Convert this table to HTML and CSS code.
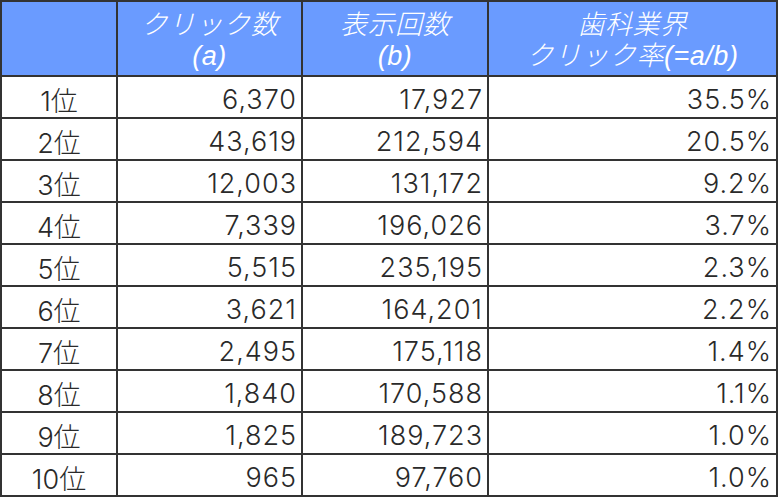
FILE: index.html
```html
<!DOCTYPE html>
<html lang="ja">
<head>
<meta charset="utf-8">
<title>歯科業界 クリック率</title>
<link rel="stylesheet" href="styles.css">
</head>
<body>
<div class="grid">
  <div class="cell head"></div>
  <div class="cell head"><span class="line">クリック数</span><span class="line">(a)</span></div>
  <div class="cell head"><span class="line">表示回数</span><span class="line">(b)</span></div>
  <div class="cell head"><span class="line">歯科業界</span><span class="line">クリック率(=a/b)</span></div>

  <div class="cell rank">1位</div><div class="cell num">6,370</div><div class="cell num">17,927</div><div class="cell num">35.5%</div>
  <div class="cell rank">2位</div><div class="cell num">43,619</div><div class="cell num">212,594</div><div class="cell num">20.5%</div>
  <div class="cell rank">3位</div><div class="cell num">12,003</div><div class="cell num">131,172</div><div class="cell num">9.2%</div>
  <div class="cell rank">4位</div><div class="cell num">7,339</div><div class="cell num">196,026</div><div class="cell num">3.7%</div>
  <div class="cell rank">5位</div><div class="cell num">5,515</div><div class="cell num">235,195</div><div class="cell num">2.3%</div>
  <div class="cell rank">6位</div><div class="cell num">3,621</div><div class="cell num">164,201</div><div class="cell num">2.2%</div>
  <div class="cell rank">7位</div><div class="cell num">2,495</div><div class="cell num">175,118</div><div class="cell num">1.4%</div>
  <div class="cell rank">8位</div><div class="cell num">1,840</div><div class="cell num">170,588</div><div class="cell num">1.1%</div>
  <div class="cell rank">9位</div><div class="cell num">1,825</div><div class="cell num">189,723</div><div class="cell num">1.0%</div>
  <div class="cell rank">10位</div><div class="cell num">965</div><div class="cell num">97,760</div><div class="cell num">1.0%</div>
</div>
</body>
</html>
```

FILE: styles.css
```css
html, body {
  margin: 0;
  padding: 0;
  background: #ffffff;
}

.grid {
  display: grid;
  grid-template-columns: 116px 185px 186px 289px;
  grid-template-rows: 75px repeat(10, 42px);
  width: 776px;
  border-top: 2px solid #333333;
  border-left: 2px solid #333333;
  font-family: "Inter", "Liberation Sans", "Noto Sans CJK JP", sans-serif;
  font-weight: 300;
  color: #2a2a2a;
}

.cell {
  box-sizing: border-box;
  border-right: 2px solid #333333;
  border-bottom: 2px solid #333333;
  display: flex;
  align-items: center;
  font-size: 27px;
  white-space: nowrap;
}

.head {
  background: #6a9bff;
  color: #ffffff;
  font-family: "Liberation Sans", "Noto Sans CJK JP", sans-serif;
  font-style: italic;
  font-weight: 300;
  font-size: 27px;
  letter-spacing: 0.5px;
  flex-direction: column;
  justify-content: center;
  text-align: center;
  padding-top: 4px;
}

.line {
  display: block;
  line-height: 31px;
  height: 31px;
}

.rank {
  justify-content: center;
  padding-top: 4px;
}

.num {
  justify-content: flex-end;
  padding-right: 4px;
  letter-spacing: 1px;
  padding-top: 4px;
}
```
